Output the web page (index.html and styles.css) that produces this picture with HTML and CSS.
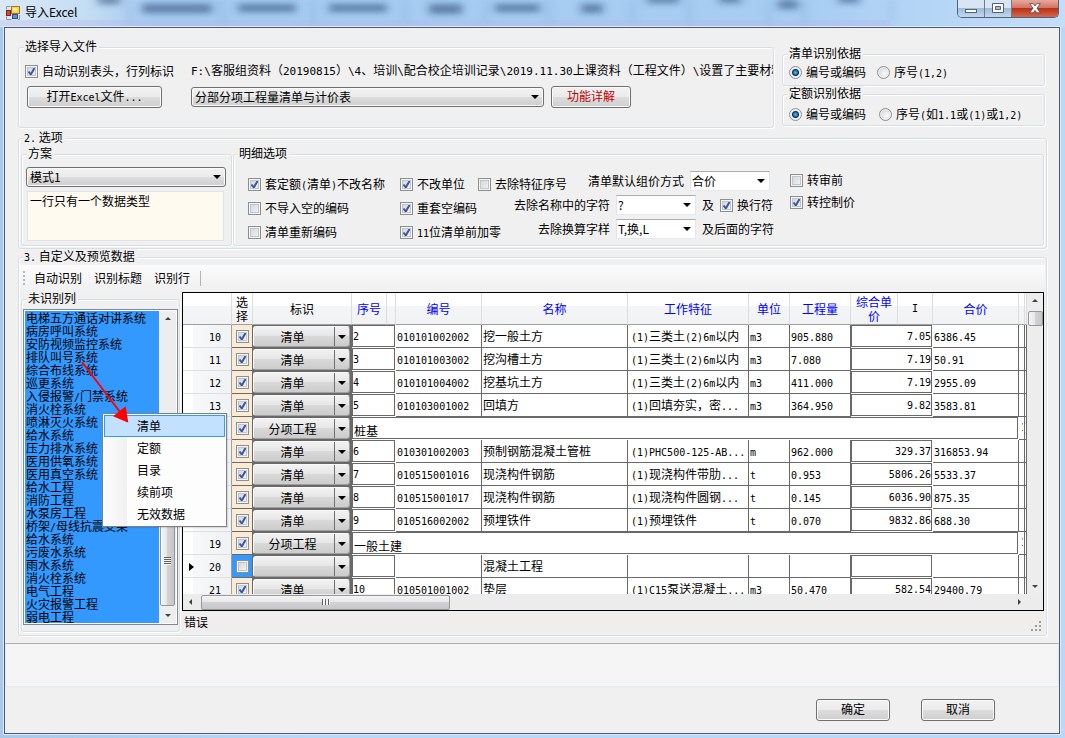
FILE: index.html
```html
<!DOCTYPE html>
<html lang="zh-CN">
<head>
  <meta charset="UTF-8">
  <meta name="viewport" content="width=device-width, initial-scale=1.0">
  <title>导入Excel</title>
  <link rel="stylesheet" href="styles.css">
</head>
<body>
  <div class="window">
    <header class="titlebar">
      <svg class="glass" width="1065" height="28" aria-hidden="true">
        <defs><filter id="soft" x="-20%" y="-60%" width="140%" height="220%"><feGaussianBlur stdDeviation="4 3"/></filter></defs>
        <g stroke="#5f8dc0" stroke-opacity=".5" stroke-width="2" filter="url(#soft)">
          <path d="M129 0v26M223 0v26M313 0v26M405 0v26M485 0v26M549 0v26M633 0v26M689 0v26M769 0v26M804 0v26M891 0v20"/>
        </g>
        <g fill="#1c3f6b" fill-opacity=".55" filter="url(#soft)">
          <rect x="98" y="-4" width="22" height="8"/>
          <rect x="142" y="4" width="70" height="9"/>
          <rect x="238" y="4" width="58" height="8"/>
          <rect x="329" y="4" width="58" height="8"/>
          <rect x="429" y="4" width="33" height="10"/>
          <rect x="495" y="4" width="45" height="8"/>
          <rect x="581" y="4" width="22" height="9"/>
          <rect x="647" y="-4" width="32" height="7"/>
          <rect x="719" y="-4" width="22" height="7"/>
          <rect x="778" y="0" width="20" height="9"/>
          <rect x="838" y="-4" width="22" height="7"/>
        </g>
        <path d="M0 23h891" stroke="#b9b4ea" stroke-width="6" stroke-opacity=".35"/>
      </svg>
      <svg class="app-icon" width="14" height="14" viewBox="0 0 14 14">
        <rect x="5.500" y=".5" width="8" height="7" fill="#fbd34a" stroke="#a8761a"/>
        <rect x="7" y="2" width="4" height="3" fill="#fff0a8"/>
        <rect x=".5" y="4.500" width="4" height="5" fill="#d04a34" stroke="#7d2418"/>
        <rect x="6.500" y="8.500" width="5" height="4" fill="#5b8de0" stroke="#2a4f9c"/>
        <path d="M.5 3.500V.5h4M.5 10.500v3h5M13.500 9v4.500h-1.500" fill="none" stroke="#8a97a8"/>
      </svg>
      <h1>导入Excel</h1>
      <div class="win-buttons">
        <button type="button" class="win-min" aria-label="最小化">
          <svg width="12" height="12"><rect x=".5" y="6.500" width="11" height="3" fill="#fff" stroke="#53617a"/></svg>
        </button>
        <button type="button" class="win-max" aria-label="最大化">
          <svg width="12" height="11"><path d="M.5.5h11v9H.5z" fill="#fff" stroke="#53617a"/><path d="M3.500 3.500h5v3h-5z" fill="#a9bdd6" stroke="#53617a"/></svg>
        </button>
        <button type="button" class="win-close" aria-label="关闭">
          <svg width="12" height="11" viewBox="0 0 12 11"><path d="M.7.6h3.500L6 3 7.800.6h3.500L8 5.200l3.300 4.600H7.700L6 7.400 4.300 9.800H.7L4 5.200z" fill="#fff" stroke="#5c4347" stroke-width=".8"/></svg>
        </button>
      </div>
    </header>

    <main class="client">
      <div class="content">
        <div class="top-row">
          <fieldset class="group file-group">
            <legend>选择导入文件</legend>
            <div class="file-grid">
              <label class="check"><input type="checkbox" checked>自动识别表头，行列标识</label>
              <div class="path"><span class="en">F:\</span>客服组资料（<span class="en">20190815</span>）<span class="en">\4</span>、培训<span class="en">\</span>配合校企培训记录<span class="en">\2019.11.30</span>上课资料（工程文件）<span class="en">\</span>设置了主要材料</div>
              <button type="button" class="btn btn-open">打开<span class="en">Excel</span>文件<span class="en">...</span></button>
              <div class="sheet-row">
                <span class="combo combo-gray combo-sheet"><select aria-label="工作表"><option>分部分项工程量清单与计价表</option></select></span>
                <button type="button" class="btn btn-help">功能详解</button>
              </div>
            </div>
          </fieldset>
          <div class="basis">
            <fieldset class="group">
              <legend>清单识别依据</legend>
              <div class="radio-row">
                <label class="check"><input type="radio" name="qd" checked>编号或编码</label>
                <label class="check"><input type="radio" name="qd"><span>序号<span class="en">(1,2)</span></span></label>
              </div>
            </fieldset>
            <fieldset class="group">
              <legend>定额识别依据</legend>
              <div class="radio-row radio-row-low">
                <label class="check"><input type="radio" name="de" checked>编号或编码</label>
                <label class="check"><input type="radio" name="de"><span>序号<span class="en">(</span>如<span class="en">1.1</span>或<span class="en">(1)</span>或<span class="en">1,2)</span></span></label>
              </div>
            </fieldset>
          </div>
        </div>

        <fieldset class="group outer options">
          <legend><span class="en">2.</span> 选项</legend>
          <div class="options-row">
            <fieldset class="group scheme">
              <legend>方案</legend>
              <span class="combo combo-gray combo-scheme"><select aria-label="方案"><option>模式1</option></select></span>
              <textarea class="scheme-note" aria-label="方案说明" spellcheck="false">一行只有一个数据类型</textarea>
            </fieldset>
            <fieldset class="group detail">
              <legend>明细选项</legend>
              <div class="detail-cols">
                <div class="detail-rows">
                  <div class="detail-row">
                    <label class="check col-a"><input type="checkbox" checked><span>套定额<span class="en">(</span>清单<span class="en">)</span>不改名称</span></label>
                    <label class="check"><input type="checkbox" checked>不改单位</label>
                    <label class="check col-c"><input type="checkbox">去除特征序号</label>
                    <label class="field" for="price">清单默认组价方式</label>
                    <span class="combo combo-white"><select id="price"><option>合价</option></select></span>
                  </div>
                  <div class="detail-row">
                    <label class="check col-a"><input type="checkbox">不导入空的编码</label>
                    <label class="check"><input type="checkbox" checked>重套空编码</label>
                    <label class="field" for="chars">去除名称中的字符</label>
                    <span class="combo combo-white"><select id="chars"><option>?</option></select></span>
                    <span class="tail">及<label class="check"><input type="checkbox" checked>换行符</label></span>
                  </div>
                  <div class="detail-row">
                    <label class="check col-a"><input type="checkbox">清单重新编码</label>
                    <label class="check"><input type="checkbox" checked><span><span class="en">11</span>位清单前加零</span></label>
                    <label class="field" for="words">去除换算字样</label>
                    <span class="combo combo-white"><select id="words"><option>T,换,L</option></select></span>
                    <span class="tail">及后面的字符</span>
                  </div>
                </div>
                <div class="detail-last">
                  <label class="check"><input type="checkbox">转审前</label>
                  <label class="check"><input type="checkbox" checked>转控制价</label>
                </div>
              </div>
            </fieldset>
          </div>
        </fieldset>

        <fieldset class="group outer preview">
          <legend><span class="en">3.</span> 自定义及预览数据</legend>
          <div class="toolbar">
            <i class="grip"></i>
            <button type="button">自动识别</button>
            <button type="button">识别标题</button>
            <button type="button">识别行</button>
            <i class="sep"></i>
          </div>
          <div class="preview-row">
            <div class="side">
              <fieldset class="group list-group">
                <legend>未识别列</legend>
                <div class="listbox">
                  <ul id="systems"></ul>
                  <div class="vbar">
                    <i class="tri up"></i>
                    <i class="thumb list-thumb"></i>
                    <i class="tri down"></i>
                  </div>
                </div>
              </fieldset>
              <div class="menu" role="menu">
                <button type="button" role="menuitem" class="hot">清单</button>
                <button type="button" role="menuitem">定额</button>
                <button type="button" role="menuitem">目录</button>
                <button type="button" role="menuitem">续前项</button>
                <button type="button" role="menuitem">无效数据</button>
              </div>
              <svg class="pointer" width="50" height="66" viewBox="0 0 50 66" aria-hidden="true">
                <path d="M1 1l38 50" stroke="#f00" stroke-width="2"/>
                <path d="M46 60l-12-5 10-8z" fill="#f00" stroke="#f00" stroke-width="2"/>
              </svg>
            </div>
            <div class="data">
              <div class="grid-frame">
                <div class="grid-view">
                  <table>
                    <colgroup>
                      <col class="w-head"><col class="w-pick"><col class="w-kind"><col class="w-no"><col class="w-gap">
                      <col class="w-code"><col><col class="w-feat"><col class="w-unit"><col class="w-qty">
                      <col class="w-price"><col class="w-i"><col class="w-sum"><col class="w-end"><col class="w-rest">
                    </colgroup>
                    <thead>
                      <tr>
                        <th></th><th class="dark">选<br>择</th><th class="dark">标识</th><th>序号</th><th></th>
                        <th>编号</th><th>名称</th><th>工作特征</th><th>单位</th><th>工程量</th>
                        <th>综合单<br>价</th><th class="dark mono">I</th><th>合价</th><th></th><th></th>
                      </tr>
                    </thead>
                    <tbody id="rows"></tbody>
                  </table>
                </div>
                <div class="vbar grid-vbar">
                  <i class="tri up"></i>
                  <i class="thumb grid-thumb"></i>
                  <i class="tri down"></i>
                </div>
                <div class="hbar">
                  <i class="tri left"></i>
                  <i class="thumb hthumb"></i>
                  <i class="tri right"></i>
                </div>
              </div>
              <div class="status">
                <span>错误</span>
                <svg width="11" height="11" viewBox="0 0 11 11" fill="#a09c9c"><path d="M8 0h2v2H8zM4 4h2v2H4zM8 4h2v2H8zM0 8h2v2H0zM4 8h2v2H4zM8 8h2v2H8z"/></svg>
              </div>
            </div>
          </div>
        </fieldset>
      </div>

      <div class="message"></div>
      <div class="actions">
        <button type="button" class="btn btn-action">确定</button>
        <button type="button" class="btn btn-action">取消</button>
      </div>
    </main>
  </div>

  <script>
    const systems = ['电梯五方通话对讲系统', '病房呼叫系统', '安防视频监控系统', '排队叫号系统', '综合布线系统',
      '巡更系统', '入侵报警/门禁系统', '消火栓系统', '喷淋灭火系统', '给水系统', '压力排水系统', '医用供氧系统',
      '医用真空系统', '给水工程', '消防工程', '水泵房工程', '桥架/母线抗震支架', '给水系统', '污废水系统',
      '雨水系统', '消火栓系统', '电气工程', '火灾报警工程', '弱电工程'];

    // 行号, 标识, 序号, 编号, 名称, 工作特征, 单位, 工程量, 综合单价, 合价
    const rows = [
      [10, '清单', '2', '010101002002', '挖一般土方', '(1)三类土(2)6m以内', 'm3', '905.880', '7.05', '6386.45'],
      [11, '清单', '3', '010101003002', '挖沟槽土方', '(1)三类土(2)6m以内', 'm3', '7.080', '7.19', '50.91'],
      [12, '清单', '4', '010101004002', '挖基坑土方', '(1)三类土(2)6m以内', 'm3', '411.000', '7.19', '2955.09'],
      [13, '清单', '5', '010103001002', '回填方', '(1)回填夯实，密...', 'm3', '364.950', '9.82', '3583.81'],
      [14, '分项工程', '桩基'],
      [15, '清单', '6', '010301002003', '预制钢筋混凝土管桩', '(1)PHC500-125-AB...', 'm', '962.000', '329.37', '316853.94'],
      [16, '清单', '7', '010515001016', '现浇构件钢筋', '(1)现浇构件带肋...', 't', '0.953', '5806.26', '5533.37'],
      [17, '清单', '8', '010515001017', '现浇构件钢筋', '(1)现浇构件圆钢...', 't', '0.145', '6036.90', '875.35'],
      [18, '清单', '9', '010516002002', '预埋铁件', '(1)预埋铁件', 't', '0.070', '9832.86', '688.30'],
      [19, '分项工程', '一般土建'],
      [20, '', '', '', '混凝土工程', '', '', '', '', ''],
      [21, '清单', '10', '010501001002', '垫层', '(1)C15泵送混凝土...', 'm3', '50.470', '582.54', '29400.79']
    ];

    // 半角字符用等宽字体
    function mix(s) {
      return s.replace(/[\x21-\x7e]+/g, '<span class="en">$&</span>');
    }

    document.getElementById('systems').innerHTML = systems.map(s => '<li>' + mix(s) + '</li>').join('');

    document.getElementById('rows').innerHTML = rows.map(r => {
      const current = r[0] === 20;
      let html = '<tr><th class="rowhead">' + (current ? '<i class="marker"></i>' : '') + '<span class="en">' + r[0] + '</span></th>' +
        '<td class="pick' + (current ? ' current' : '') + '"><input type="checkbox" aria-label="选择"' + (current ? '' : ' checked') + '></td>' +
        '<td class="kind"><span class="combo combo-cell"><select aria-label="标识"><option>' + r[1] + '</option></select></span></td>';
      if (r.length === 3) {
        return html + '<td class="boxed band" colspan="10"><div>' + r[2] + '</div></td><td class="more"><div class="en">1</div></td><td></td></tr>';
      }
      html += '<td class="boxed" colspan="2"><div>' + mix(r[2]) + '</div></td>';
      html += r.slice(3, 8).map((s, i) => '<td' + (i === 2 ? ' class="feat"' : '') + '>' + mix(s) + '</td>').join('');
      html += '<td class="boxed price" colspan="2"><div>' + mix(r[8]) + '</div></td><td>' + mix(r[9]) + '</td><td></td><td></td></tr>';
      return html;
    }).join('');
  </script>
</body>
</html>
```

FILE: styles.css
```css
* {
  margin: 0;
  padding: 0;
  box-sizing: border-box;
}

body {
  font-family: "Noto Sans CJK SC", sans-serif;
  font-size: 12px;
  line-height: 14px;
  color: #000;
  background: #b5d5f5;
}

button,
select,
textarea,
input {
  font: inherit;
  color: inherit;
}

.en,
.mono {
  font-family: "DejaVu Sans Mono", monospace;
  font-size: 10px;
  line-height: 10px;
}

/* window frame */
.window {
  min-height: 100vh;
  padding: 0 5px 5px 4px;
  background: linear-gradient(90deg, #a9c8ea, #b9d8f9 30%, #b9d8f9);
  display: flex;
  flex-direction: column;
}

.titlebar {
  position: relative;
  height: 27px;
  margin: 0 -5px 0 -4px;
  padding-left: 6px;
  display: flex;
  gap: 5px;
  overflow: hidden;
  background: linear-gradient(90deg, #dbe9f6, #c3dcf3 90px, #a5cbf1 150px, #a7cdf3 800px, #c3def8);
}

.titlebar > * {
  position: relative;
}

.titlebar .glass {
  position: absolute;
  left: 0;
  top: 0;
}

.app-icon {
  margin-top: 6px;
}

.titlebar h1 {
  font-size: 12px;
  font-weight: normal;
  line-height: 24px;
  flex: 1;
}

.win-buttons {
  display: flex;
  height: 18px;
  margin-right: 6px;
  border: 1px solid #53617a;
  border-top: 0;
  border-radius: 0 0 5px 5px;
  overflow: hidden;
}

.win-buttons button {
  border: 0;
  border-right: 1px solid #6c7c94;
  width: 27px;
  display: flex;
  justify-content: center;
  padding-top: 3px;
  background: linear-gradient(#d8e6f4 45%, #a3bbd6 50%, #c0d8ee);
}

.win-buttons .win-close {
  width: 46px;
  border-right: 0;
  background: linear-gradient(#e4a498 5%, #d27563 45%, #b8321b 50%, #d4674a);
}

.client {
  flex: 1;
  border: 1px solid #4c5b70;
  background: #f0f0f0;
  box-shadow: 0 0 0 1px #dceafa;
  position: relative;
}

.content {
  padding: 11px 12px 7px 13px;
}

/* group boxes */
.group {
  min-width: 0;
  border: 1px solid #d5dfe5;
  border-radius: 3px;
  padding: 0 6px;
  box-shadow: inset 1px 1px 0 #fff, 1px 1px 0 #fff;
}

.group > legend {
  position: relative;
  height: 16px;
  background: #f0f0f0;
  line-height: 14px;
  padding: 0 2px 2px 1px;
  margin-left: -1px;
}

.group.outer {
  padding: 0 2px 2px;
}

.group.outer > legend {
  margin-left: 2px;
}

/* form controls */
.check {
  display: inline-flex;
  align-items: center;
  gap: 4px;
  height: 18px;
  white-space: nowrap;
}

input[type="checkbox"] {
  appearance: none;
  flex: none;
  width: 13px;
  height: 13px;
  border: 1px solid #8e8f8f;
  background: linear-gradient(135deg, #cdd2d8, #f7f7f7);
  box-shadow: inset 0 0 0 1px #f4f4f4, inset 0 0 0 2px #c0c6cc;
}

input[type="checkbox"]:checked {
  background: url("data:image/svg+xml,%3Csvg xmlns='http://www.w3.org/2000/svg' width='11' height='11'%3E%3Cpath d='M2.500 5.500L4.800 8.500 8.500 2' fill='none' stroke='%233d55a5' stroke-width='2'/%3E%3C/svg%3E") no-repeat, linear-gradient(135deg, #cdd2d8, #f7f7f7);
}

input[type="radio"] {
  appearance: none;
  flex: none;
  width: 13px;
  height: 13px;
  border: 1px solid #8e8f8f;
  border-radius: 50%;
  background: radial-gradient(circle at 60% 60%, #fbfbfb, #c4c9ce);
  box-shadow: inset 0 0 0 1px #f4f4f4;
}

input[type="radio"]:checked {
  background: radial-gradient(circle at 50% 50%, #5cc4ee 0, #1673ad 2px, #0a2e50 3px, #e6e9ec 4px);
}

.btn {
  height: 22px;
  border: 1px solid #707070;
  border-radius: 3px;
  background: linear-gradient(#f2f2f2, #ebebeb 49%, #dddddd 50%, #cfcfcf);
  box-shadow: inset 0 0 0 1px #fbfbfb;
  line-height: 16px;
  padding-bottom: 2px;
}

.combo {
  display: inline-grid;
  align-items: center;
}

.combo select {
  grid-area: 1 / 1;
  appearance: none;
  width: 100%;
  height: 20px;
  border: 1px solid #707070;
  border-radius: 3px;
  padding: 0 18px 0 3px;
  outline: 0;
}

.combo::after {
  content: "";
  grid-area: 1 / 1;
  justify-self: end;
  margin-right: 5px;
  border: 4px solid transparent;
  border-top-color: #000;
  border-bottom: 0;
  pointer-events: none;
}

.combo-gray select {
  background: linear-gradient(#f2f2f2, #ebebeb 49%, #dddddd 50%, #cfcfcf);
  box-shadow: inset 0 0 0 1px #fbfbfb;
}

.combo-white {
  width: 80px;
}

.combo-white select {
  background: #fff;
  border-color: #abadb3 #e2e8ee #e3e9ef #e2e3ea;
  border-radius: 0;
  padding-left: 1px;
}

/* file selection */
.top-row {
  display: flex;
  gap: 8px;
  padding-right: 2px;
}

.file-group {
  flex: 1;
  height: 89px;
  padding-right: 0;
}

.file-grid {
  display: grid;
  grid-template-columns: 166px minmax(0, 1fr);
  grid-template-rows: 20px 22px;
  row-gap: 4px;
  padding-top: 7px;
}

.path {
  overflow: hidden;
  white-space: nowrap;
  line-height: 16px;
}

.path .en {
  font-size: 11px;
}

.btn-open {
  width: 135px;
  margin-left: 2px;
}

.sheet-row {
  display: flex;
  align-items: center;
  gap: 7px;
}

.combo-sheet {
  width: 353px;
}

.btn-help {
  width: 80px;
  color: #c00000;
}

.basis {
  width: 263px;
  padding-top: 7px;
}

.basis .group {
  height: 40px;
}

.radio-row {
  display: flex;
  gap: 11px;
  padding-top: 1px;
}

.radio-row-low {
  gap: 13px;
  padding-top: 3px;
}

/* options */
.options {
  margin-top: 2px;
}

.options-row {
  display: flex;
  gap: 1px;
}

.scheme {
  width: 211px;
  height: 100px;
  padding: 5px 4px 4px;
}

.scheme > legend {
  margin-left: 1px;
}

.combo-scheme {
  display: grid;
  width: 200px;
}

.scheme-note {
  display: block;
  width: 197px;
  height: 50px;
  margin: 4px 0 0 1px;
  padding: 2px;
  border: 1px solid #e2e3ea;
  background: #fffaf0;
  resize: none;
  outline: 0;
}

.detail {
  flex: 1;
  height: 100px;
}

.detail > legend {
  margin-left: -2px;
}

.detail-cols {
  display: flex;
  gap: 20px;
  padding: 7px 0 0 8px;
}

.detail-rows {
  width: 522px;
}

.detail-row {
  display: flex;
  align-items: center;
  height: 24px;
  white-space: nowrap;
}

.detail-row > .check {
  align-self: flex-end;
}

.col-a {
  width: 152px;
}

.col-c {
  margin-left: 13px;
}

.field {
  flex: 1;
  text-align: right;
  padding-right: 6px;
}

.detail-row .tail {
  display: flex;
  align-items: center;
  gap: 6px;
  width: 74px;
  margin-left: 6px;
  margin-right: -6px;
}

.detail-last {
  display: flex;
  flex-direction: column;
}

.detail-last .check {
  height: 22px;
}

/* toolbar */
.group.preview {
  padding: 0 2px 3px;
}

.toolbar {
  display: flex;
  align-items: center;
  height: 26px;
  margin: 0 -1px;
  padding-left: 3px;
  background: linear-gradient(#fcfcfc, #f0f0f0);
}

.grip {
  width: 2px;
  height: 15px;
  margin-right: 9px;
  background: repeating-linear-gradient(#b8b8b8 0 2px, transparent 2px 4px);
}

.toolbar button {
  border: 0;
  background: none;
  margin-right: 12px;
}

.sep {
  width: 1px;
  height: 15px;
  margin-left: -2px;
  background: #b4b4b4;
}

.preview-row {
  display: flex;
  gap: 2px;
}

/* unrecognised columns */
.side {
  position: relative;
  width: 159px;
}

.list-group {
  padding: 2px 1px 6px;
}

.list-group > legend {
  margin-left: 4px;
}

.listbox {
  display: flex;
  height: 316px;
  border: 1px solid #828790;
  background: #fff;
  padding: 1px;
}

.listbox ul {
  flex: 1;
  list-style: none;
  background: #3399ff;
  padding-left: 1px;
  white-space: nowrap;
}

.listbox li {
  line-height: 13px;
  height: 13px;
}

.vbar {
  display: flex;
  flex-direction: column;
  align-items: center;
  justify-content: space-between;
  width: 17px;
  background: #ededed;
  padding: 6px 0;
}

.tri {
  width: 0;
  height: 0;
  border: 3px solid transparent;
}

.tri.up {
  border-bottom-color: #404040;
  border-top: 0;
}

.tri.down {
  border-top-color: #404040;
  border-bottom: 0;
}

.tri.left {
  border-right-color: #404040;
  border-left: 0;
}

.tri.right {
  border-left-color: #404040;
  border-right: 0;
}

.thumb {
  border: 1px solid #979797;
  border-radius: 2px;
  width: 15px;
  display: flex;
  align-items: center;
  justify-content: center;
  background: linear-gradient(90deg, #f5f5f5, #e6e6e8 48%, #d2d2d5 50%, #c6c6ca);
}

.list-thumb {
  height: 90px;
  margin-top: auto;
  margin-bottom: 8px;
}

.list-thumb::after {
  content: "";
  width: 7px;
  height: 8px;
  background: repeating-linear-gradient(#606060 0 1px, #f4f4f4 1px 2px);
}

.menu {
  position: absolute;
  left: 81px;
  top: 122px;
  width: 125px;
  padding: 1px;
  border: 1px solid #808080;
  background: linear-gradient(90deg, #fdfdfd, #f1f1f1 24px, #fdfdfd 24px);
  box-shadow: 1px 1px 1px rgba(0, 0, 0, .1);
}

.menu button {
  display: block;
  width: 100%;
  height: 22px;
  border: 1px solid transparent;
  background: none;
  padding-left: 32px;
  text-align: left;
}

.menu .hot {
  background: #c2e0ff;
  border-color: #3399ff;
}

.pointer {
  position: absolute;
  left: 60px;
  top: 70px;
}

/* data grid */
.data {
  flex: 1;
  min-width: 0;
  padding-top: 1px;
}

.grid-frame {
  display: grid;
  grid-template-columns: minmax(0, 1fr) 16px;
  grid-template-rows: 301px 16px;
  border: 1px solid #000;
  background: #ececec;
}

.grid-view {
  overflow: hidden;
  background: #fff;
}

table {
  width: 100%;
  table-layout: fixed;
  border-spacing: 0;
}

.w-head { width: 49px; }
.w-pick { width: 21px; }
.w-kind { width: 99px; }
.w-no { width: 35px; }
.w-gap { width: 9px; }
.w-code { width: 86px; }
.w-feat { width: 121px; }
.w-unit { width: 41px; }
.w-qty { width: 61px; }
.w-price { width: 47px; }
.w-i { width: 35px; }
.w-sum { width: 86px; }
.w-end { width: 6px; }
.w-rest { width: 2px; }

thead th {
  height: 32px;
  font-weight: normal;
  color: #0000ff;
  border-right: 1px solid #dcdde0;
  border-bottom: 1px solid #a0a0a0;
  background: linear-gradient(#fff 40%, #f4f5f7 42%, #f1f2f4);
  white-space: nowrap;
}

thead .dark {
  color: #000;
}

tbody td,
tbody th {
  height: 23px;
  font-weight: normal;
  border-right: 1px solid #696969;
  border-bottom: 1px solid #696969;
  padding-left: 1px;
  line-height: 18px;
  white-space: nowrap;
  overflow: hidden;
}

tbody .rowhead {
  text-align: right;
  padding: 0 10px 0 0;
  border-right: 1px solid #a0a0a0;
  border-bottom: 1px solid #dedfe1;
  background: linear-gradient(90deg, #fff 20%, #f7f8fa 22%, #f1f2f4);
}

.marker {
  float: left;
  margin: 6px 0 0 6px;
  border: 4px solid transparent;
  border-left: 5px solid #000;
  border-right: 0;
}

tbody .pick {
  background: #faebd7;
  text-align: center;
  padding: 0;
}

.pick input {
  display: block;
  margin: 0 auto;
}

tbody .current {
  background: #3399ff;
}

tbody .kind {
  padding: 0;
  border: 0;
  background: #696969;
}

.combo-cell {
  display: grid;
  height: 21px;
  margin-right: 2px;
}

.combo-cell select {
  height: 21px;
  border-color: #fafafa #a0a0a0 #a0a0a0 #fafafa;
  text-align-last: center;
  padding: 0 20px 0 2px;
  background: linear-gradient(90deg, transparent 80px, #707070 80px 81px, transparent 81px), linear-gradient(#f2f2f2, #e6e6e6 49%, #d9d9d9 50%, #cccccc);
}

.combo-cell::after {
  margin-right: 4px;
}

tbody .boxed {
  padding: 0;
  border: 0;
}

.boxed div {
  height: 22px;
  margin: 0 1px 1px 0;
  border: 1px solid #696969;
  line-height: 18px;
}

.boxed.band div {
  padding-left: 1px;
  line-height: 26px;
}

.price div {
  text-align: right;
}

tbody .feat {
  padding-left: 3px;
}

tbody .more {
  padding: 0 0 0 2px;
}

.more div {
  width: 2px;
  overflow: hidden;
}

.grid-vbar {
  width: 16px;
}

.grid-thumb {
  height: 15px;
  margin-top: 9px;
  margin-bottom: auto;
}

.hbar {
  display: flex;
  align-items: center;
  padding: 0 6px;
}

.hthumb {
  width: 249px;
  height: 15px;
  margin: 0 auto 0 9px;
  background: linear-gradient(#f5f5f5, #e6e6e8 48%, #d2d2d5 50%, #c6c6ca);
}

.hthumb::after {
  content: "";
  width: 8px;
  height: 6px;
  background: repeating-linear-gradient(90deg, #606060 0 1px, #f4f4f4 1px 3px);
}

.status {
  display: flex;
  justify-content: space-between;
  align-items: center;
  height: 21px;
  padding: 0 2px;
  background: #f0eded;
}

.status svg {
  align-self: flex-end;
}

/* bottom */
.message {
  height: 44px;
  border: 1px solid #e3e9ef;
  border-top-color: #abadb3;
  background: #f5f5f5;
}

.actions {
  display: flex;
  justify-content: flex-end;
  gap: 31px;
  padding: 12px 64px 12px 0;
}

.btn-action {
  width: 74px;
}
```
